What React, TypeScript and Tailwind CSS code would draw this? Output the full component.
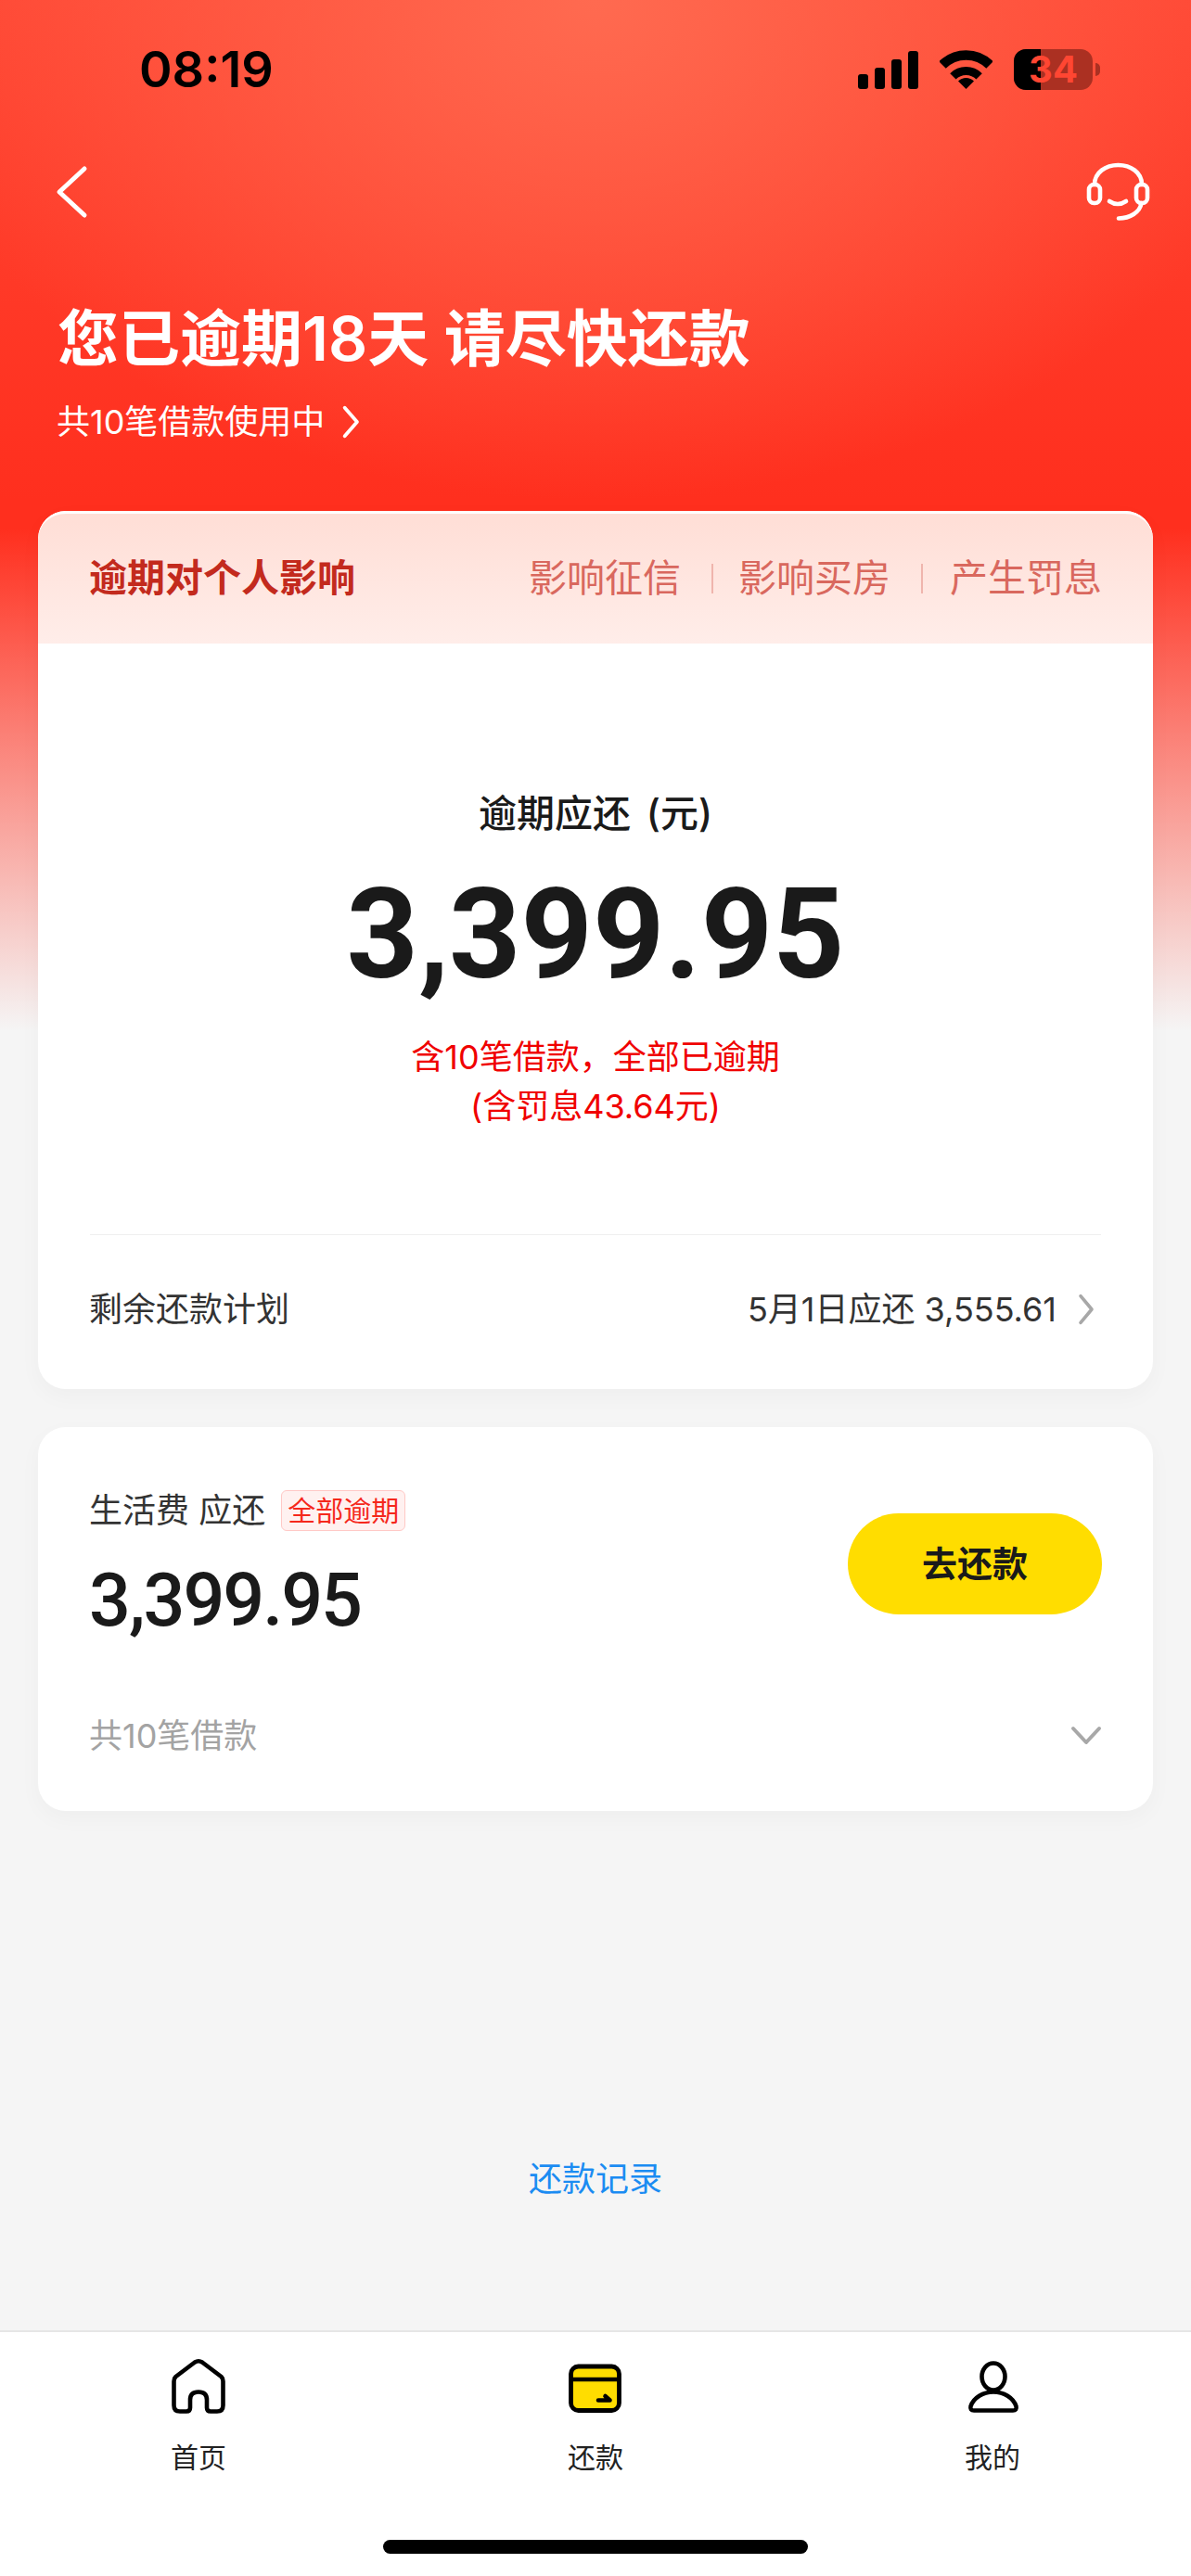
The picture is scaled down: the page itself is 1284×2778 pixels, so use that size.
import React from "react";

const SANS = "font-['Inter','Noto_Sans_CJK_SC',sans-serif]";

function Chevron({ className, d, sw = 4 }: { className: string; d: string; sw?: number }) {
  return (
    <svg className={className} viewBox="0 0 40 60" fill="none">
      <path d={d} stroke="currentColor" strokeWidth={sw} strokeLinecap="round" strokeLinejoin="round" />
    </svg>
  );
}

function StatusIcons() {
  return (
    <div className="flex items-end">
      <svg className="w-[65px] h-[41px] mr-[23px] mb-[1px]" viewBox="0 0 65 41" fill="#000">
        <rect x="0" y="25" width="11" height="16" rx="3" />
        <rect x="18" y="18" width="11" height="23" rx="3" />
        <rect x="36" y="9" width="11" height="32" rx="3" />
        <rect x="54" y="0" width="11" height="41" rx="3" />
      </svg>
      <svg className="w-[57px] h-[42px] mr-[23px] mb-[1px]" viewBox="0 0 57 42" fill="none" stroke="#000">
        <path d="M3 16 A36 36 0 0 1 54 16" strokeWidth="10.5" />
        <path d="M14.4 28.4 A20 20 0 0 1 42.6 28.4" strokeWidth="9" />
        <path d="M28.5 42 L20 33.5 A12 12 0 0 1 37 33.5 Z" fill="#000" stroke="none" />
      </svg>
      <div className="relative w-[85px] h-[44px] rounded-[13px] bg-[#ab3022]">
        <div className="h-full w-[29px] rounded-l-[13px] bg-black" />
        <div className="absolute inset-0 flex items-center justify-center text-[40px] leading-[44px] font-bold text-[#ff4632] font-['Inter',sans-serif]">
          34
        </div>
      </div>
      <div className="w-[5px] h-[14px] rounded-r-[5px] bg-[#ab3022] ml-[3px] mb-[15px]" />
    </div>
  );
}

function HomeIcon() {
  return (
    <svg className="w-[90px] h-[90px]" viewBox="0 0 90 90" fill="none">
      <path
        d="M20.5 33 L41 17.5 Q45 15 49 17.5 L69.5 33 Q71.5 34.8 71.5 38 V64 Q71.5 70.5 65 70.5 H58 Q54 70.5 54 66.5 V58 Q54 49.5 45 49.5 Q36 49.5 36 58 V66.5 Q36 70.5 32 70.5 H25 Q18.5 70.5 18.5 64 V38 Q18.5 34.8 20.5 33 Z"
        stroke="#000"
        strokeWidth="4.6"
        strokeLinejoin="round"
      />
    </svg>
  );
}

function CardIcon() {
  return (
    <svg className="w-[90px] h-[90px]" viewBox="0 0 90 90" fill="none">
      <rect x="18.5" y="22" width="52" height="47.5" rx="8" fill="#ffdd00" stroke="#000" strokeWidth="4.8" />
      <path d="M18 36 H71" stroke="#000" strokeWidth="4.6" />
      <path d="M48 58.5 H60.5 L55.5 54" stroke="#000" strokeWidth="4.6" strokeLinecap="round" strokeLinejoin="round" />
    </svg>
  );
}

function UserIcon() {
  return (
    <svg className="w-[90px] h-[90px]" viewBox="0 0 90 90" fill="none" stroke="#000" strokeWidth="4.6">
      <ellipse cx="46" cy="33" rx="12.5" ry="14.5" />
      <path d="M25 69.5 H67 Q71.5 69.5 70.5 65 C67.5 55.5 57 49.5 46 49.5 C35 49.5 24.5 55.5 21.5 65 Q20.5 69.5 25 69.5 Z" strokeLinejoin="round" />
    </svg>
  );
}

function Tab({ icon, label }: { icon: React.ReactNode; label: string }) {
  return (
    <div className="flex flex-col items-center">
      {icon}
      <div className="mt-[8px] text-[30px] leading-[44px] text-[#222]">{label}</div>
    </div>
  );
}

export default function App() {
  return (
    <div
      className={`${SANS} flex flex-col h-[2778px] w-[1284px] overflow-hidden bg-[#f5f5f5] bg-[radial-gradient(ellipse_760px_540px_at_50%_0,#ff6a50,rgba(255,106,80,0)),linear-gradient(180deg,#ff4633_0,#ff2f1e_540px,#ff2f1e_570px,#f5f5f5_1112px)]`}
    >
      <div className="flex items-center justify-between h-[150px] pl-[150px] pr-[98px]">
        <div className="text-[54px] leading-[60px] font-semibold text-black font-['Inter',sans-serif]">08:19</div>
        <StatusIcons />
      </div>

      <div className="flex items-center justify-between h-[114px] pl-[60px] pr-[42px] text-white">
        <Chevron className="w-[40px] h-[60px]" d="M31 5 L4 30 L31 55" sw={5} />
        <svg className="w-[72px] h-[66px]" viewBox="0 0 72 66" fill="none" stroke="#fff" strokeWidth="4.6" strokeLinecap="round">
          <rect x="4" y="25" width="12" height="20" rx="5.5" />
          <rect x="55" y="25" width="12" height="20" rx="5.5" />
          <path d="M10 25 C10 12 22 4 35.5 4 C49 4 61 12 61 25" />
          <path d="M60.5 45 C59 55 48 61.5 36 61.5" />
          <path d="M26 43 Q35 49 44 43" />
        </svg>
      </div>

      <div className="mt-[61px] pl-[62px] text-[66px] leading-[80px] font-semibold text-white">您已逾期18天 请尽快还款</div>
      <div className="mt-[25px] pl-[61px] flex items-center text-white text-[36px] leading-[50px]">
        共10笔借款使用中
        <Chevron className="ml-[14px] w-[28px] h-[38px]" d="M10 6 L31 30 L10 54" sw={6} />
      </div>

      <div className="mt-[71px] mx-[41px] rounded-[30px] bg-white overflow-hidden shadow-[0_8px_24px_rgba(0,0,0,0.03)]">
        <div className="h-[143px] border-t-[3px] border-white rounded-t-[30px] bg-[linear-gradient(180deg,#ffded6,#ffede9)] flex items-center justify-between pl-[55px] pr-[55px]">
          <div className="text-[41px] font-semibold text-[#c32a1d]">逾期对个人影响</div>
          <div className="flex items-center text-[41px] text-[#d9685e]">
            <span>影响征信</span>
            <span className="ml-[33px] mr-[27px] w-[2px] h-[32px] bg-[#f0b5ad]" />
            <span>影响买房</span>
            <span className="ml-[33px] mr-[29px] w-[2px] h-[32px] bg-[#f0b5ad]" />
            <span>产生罚息</span>
          </div>
        </div>

        <div className="pt-[158px] flex flex-col items-center">
          <div className="text-[41px] leading-[50px] text-[#1a1a1a] font-medium [word-spacing:6px]">逾期应还 (元)</div>
          <div className="mt-[36px] text-[135px] leading-[140px] font-bold text-[#1a1a1a] font-['Roboto',sans-serif]">3,399.95</div>
          <div className="mt-[36px] text-[36px] leading-[53px] text-[#f00000]">含10笔借款，全部已逾期</div>
          <div className="text-[36px] leading-[53px] text-[#f00000]">(含罚息43.64元)</div>
        </div>

        <div className="mt-[111px] mx-[56px] h-[1px] bg-[#efefef]" />
        <div className="h-[160px] mb-[6px] pl-[55px] pr-[60px] flex items-center justify-between text-[36px] text-[#333]">
          <span>剩余还款计划</span>
          <span className="flex items-center">
            5月1日应还 3,555.61
            <Chevron className="ml-[20px] w-[24px] h-[36px] text-[#a8a8a8]" d="M10 6 L30 30 L10 54" sw={6} />
          </span>
        </div>
      </div>

      <div className="mt-[41px] mx-[41px] rounded-[30px] bg-white pt-[65px] pb-[56px] pl-[55px] pr-[55px] shadow-[0_8px_24px_rgba(0,0,0,0.03)]">
        <div className="flex items-center justify-between">
          <div>
            <div className="flex items-center h-[50px]">
              <span className="text-[36px] leading-[50px] text-[#333]">生活费 应还</span>
              <span className="ml-[17px] h-[44px] w-[134px] flex items-center justify-center rounded-[6px] border border-[#ffc9c6] bg-[#fff1f0] text-[30px] text-[#f5281c]">全部逾期</span>
            </div>
            <div className="mt-[27px] text-[79px] leading-[90px] font-medium tracking-[-2px] text-[#1a1a1a] font-['Roboto',sans-serif]">3,399.95</div>
          </div>
          <div className="mb-[3px] w-[274px] h-[109px] rounded-full bg-[#ffdd00] flex items-center justify-center text-[38px] font-semibold text-[#1a1a1a]">去还款</div>
        </div>
        <div className="mt-[76px] h-[50px] flex items-center justify-between text-[36px] text-[#a3a3a3]">
          <span>共10笔借款</span>
          <svg className="w-[34px] h-[22px]" viewBox="0 0 34 22" fill="none">
            <path d="M3 3 L17 18 L31 3" stroke="#a8a8a8" strokeWidth="4" strokeLinecap="round" strokeLinejoin="round" />
          </svg>
        </div>
      </div>

      <div className="mt-[372px] text-center text-[36px] leading-[50px] text-[#1b8cf2]">还款记录</div>

      <div className="mt-auto bg-white h-[265px] border-t-2 border-[#e6e6e6] flex flex-col items-center">
        <div className="w-full grid grid-cols-3 pt-[15px]">
          <Tab icon={<HomeIcon />} label="首页" />
          <Tab icon={<CardIcon />} label="还款" />
          <Tab icon={<UserIcon />} label="我的" />
        </div>
        <div className="mt-[67px] w-[458px] h-[15px] rounded-full bg-black" />
      </div>
    </div>
  );
}
